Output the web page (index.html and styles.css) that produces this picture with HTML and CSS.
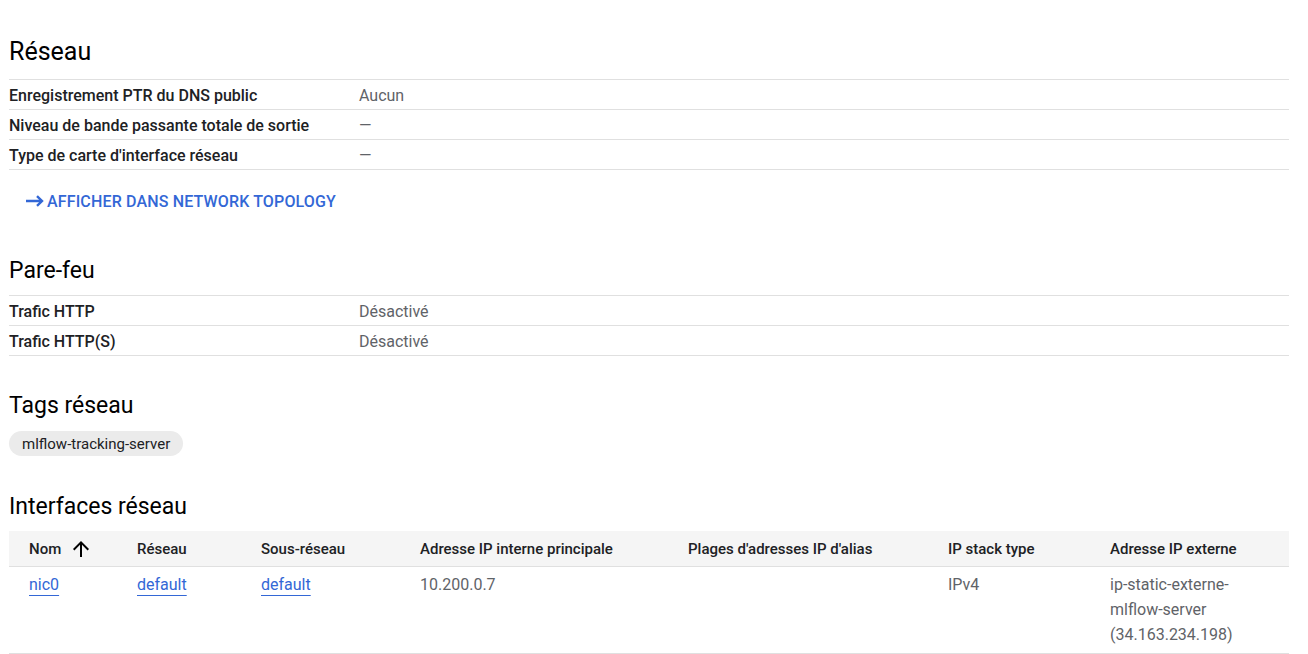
FILE: index.html
```html
<!DOCTYPE html>
<html lang="fr">
<head>
<meta charset="utf-8">
<title>Réseau</title>
<link rel="stylesheet" href="styles.css">
</head>
<body>
<main class="page">
  <section class="section s-net">
    <h2 class="title title-lg">Réseau</h2>
    <div class="kv">
      <div class="kv-row"><div class="kv-label">Enregistrement PTR du DNS public</div><div class="kv-value">Aucun</div></div>
      <div class="kv-row"><div class="kv-label">Niveau de bande passante totale de sortie</div><div class="kv-value">—</div></div>
      <div class="kv-row"><div class="kv-label">Type de carte d'interface réseau</div><div class="kv-value">—</div></div>
    </div>
    <a class="action" href="#">
      <svg class="action-icon" viewBox="0 0 18 12" width="18" height="12"><path d="M0 6h15.5M11 1.2l5 4.8-5 4.8" fill="none" stroke="currentColor" stroke-width="2.4"/></svg>
      <span>Afficher dans Network Topology</span>
    </a>
  </section>

  <section class="section s-fw">
    <h2 class="title">Pare-feu</h2>
    <div class="kv">
      <div class="kv-row"><div class="kv-label">Trafic HTTP</div><div class="kv-value">Désactivé</div></div>
      <div class="kv-row"><div class="kv-label">Trafic HTTP(S)</div><div class="kv-value">Désactivé</div></div>
    </div>
  </section>

  <section class="section s-tags">
    <h2 class="title">Tags réseau</h2>
    <div class="chips"><span class="chip">mlflow-tracking-server</span></div>
  </section>

  <section class="section s-nic">
    <h2 class="title">Interfaces réseau</h2>
    <div class="table">
      <div class="tr thead">
        <div class="th">Nom <svg class="sort" viewBox="0 0 24 24" width="24" height="24"><path d="M4 12l1.41 1.41L11 7.83V20h2V7.83l5.58 5.59L20 12l-8-8-8 8z"/></svg></div>
        <div class="th">Réseau</div>
        <div class="th">Sous-réseau</div>
        <div class="th">Adresse IP interne principale</div>
        <div class="th">Plages d'adresses IP d'alias</div>
        <div class="th">IP stack type</div>
        <div class="th">Adresse IP externe</div>
      </div>
      <div class="tr tbody">
        <div class="td"><a class="link" href="#">nic0</a></div>
        <div class="td"><a class="link" href="#">default</a></div>
        <div class="td"><a class="link" href="#">default</a></div>
        <div class="td">10.200.0.7</div>
        <div class="td"></div>
        <div class="td">IPv4</div>
        <div class="td">ip-static-externe-mlflow-server (34.163.234.198)</div>
      </div>
    </div>
  </section>
</main>
</body>
</html>
```

FILE: styles.css
```css
* { box-sizing: border-box; }
html, body { margin: 0; padding: 0; background: #fff; }
body {
  font-family: Roboto, "Liberation Sans", Arial, sans-serif;
  font-size: 16px;
  color: #202124;
  -webkit-font-smoothing: antialiased;
}
.page {
  width: 1280px;
  margin-left: 9px;
  padding-top: 38px;
  display: flex;
  flex-direction: column;
}
.section { display: flex; flex-direction: column; }
.s-fw { margin-top: 38px; }
.s-tags { margin-top: 36px; }
.s-nic { margin-top: 37px; }
.title {
  margin: 0 0 10px;
  font-size: 23px;
  line-height: 28px;
  font-weight: 400;
  color: #000;
}
.title-lg { font-size: 25px; margin-bottom: 13px; }
.s-tags .title { margin-bottom: 11px; }
.s-nic .title { margin-bottom: 10px; }
.kv { border-top: 1px solid #e0e0e0; }
.kv-row {
  display: flex;
  height: 30px;
  align-items: center;
  padding-top: 1px;
  border-bottom: 1px solid #e0e0e0;
}
.kv-label { width: 350px; font-weight: 500; color: #202124; }
.kv-value { color: #5f6368; }
.action {
  display: inline-flex;
  align-self: flex-start;
  align-items: center;
  height: 36px;
  margin-top: 13px;
  padding-left: 17px;
  color: #3367d6;
  text-decoration: none;
  text-transform: uppercase;
  font-weight: 500;
  font-size: 16px;
  letter-spacing: 0.15px;
}
.action-icon { width: 18px; height: 12px; margin-right: 3px; color: #3367d6; }
.chips { display: flex; }
.chip {
  display: inline-flex;
  align-items: center;
  height: 25px;
  padding: 0 13px;
  border-radius: 13px;
  background: #ebebeb;
  color: #202124;
  font-size: 15px;
}
.table { display: flex; flex-direction: column; }
.tr {
  display: grid;
  grid-template-columns: 108px 124px 159px 268px 260px 162px 199px;
  border-bottom: 1px solid #e0e0e0;
}
.thead { background: #f5f5f5; height: 36px; align-items: center; }
.th {
  padding-left: 20px;
  font-size: 15px;
  font-weight: 500;
  color: #202124;
  display: flex;
  align-items: center;
}
.sort { width: 24px; height: 24px; margin-left: 8px; fill: #000; }
.tbody { padding: 5px 0 6px; }
.td {
  padding-left: 20px;
  padding-right: 16px;
  line-height: 25px;
  color: #5f6368;
}
.link {
  color: #3367d6;
  text-decoration: underline;
  text-underline-offset: 5px;
  text-decoration-thickness: 1px;
}
```
